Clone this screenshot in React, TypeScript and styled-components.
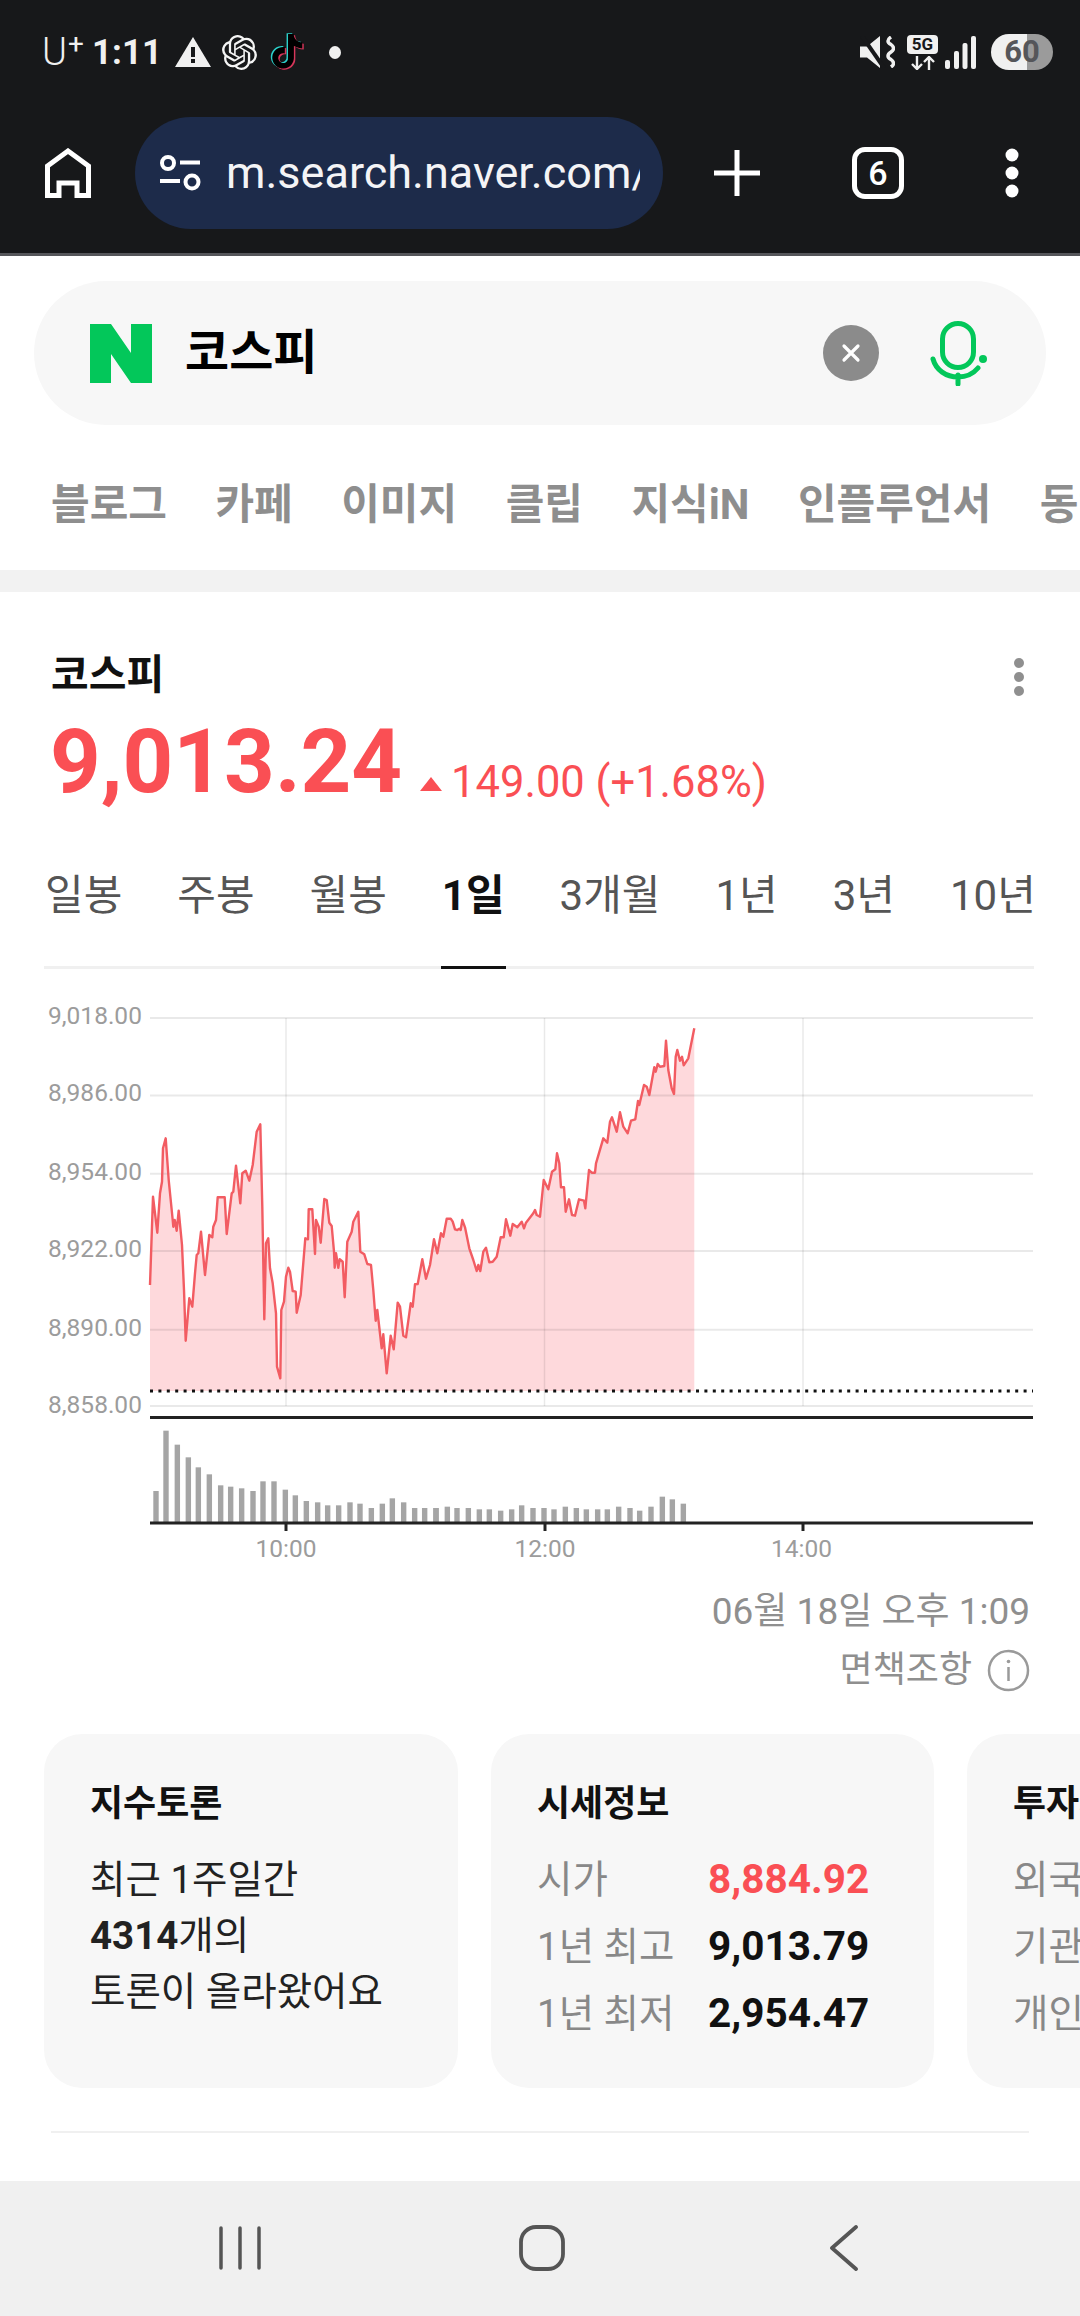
import React from "react";
import styled, { createGlobalStyle } from "styled-components";

const Global = createGlobalStyle`
  html, body { margin: 0; padding: 0; background: #fff; }
  * { box-sizing: border-box; }
`;

const FONT = `Roboto, "Noto Sans CJK KR", sans-serif`;
const RED = "#fa4f54";

const Page = styled.div`
  width: 1080px; height: 2316px; overflow: hidden; display: flex; flex-direction: column;
  font-family: ${FONT}; background: #fff;
`;
const TopBar = styled.header`
  background: #17181a; height: 256px; border-bottom: 3px solid #55565a; display: flex; flex-direction: column;
`;
const StatusRow = styled.div`
  height: 104px; padding: 0 27px 0 42px; display: flex; align-items: center; color: #f0f0f0;
`;
const Carrier = styled.span`
  font-size: 38px; font-weight: 300; width: 21px; display: flex; line-height: 38px; letter-spacing: 0;
`;
const Plus = styled.span`
  font-size: 28px; font-weight: 400; line-height: 24px; margin-left: 1px; margin-top: -1px;
`;
const Clock = styled.span`
  font-size: 35px; font-weight: 700; margin-left: 29px; width: 63px; letter-spacing: 0;
`;
const Glyph = styled.svg<{ $ml: number }>`
  display: block; flex: none; margin-left: ${(p) => p.$ml}px;
`;
const MoreIcon = styled.svg`
  display: block; flex: none; margin-top: 4px;
`;
const StatusDot = styled.span`
  width: 12px; height: 13px; border-radius: 50%; background: #f0f0f0; margin-left: 23px;
`;
const Spacer = styled.div`flex: 1;`;
const NetStack = styled.div`
  margin-left: 12px; display: flex; flex-direction: column; align-items: center; gap: 2px; width: 31px;
`;
const FiveG = styled.span`
  width: 31px; height: 19px; background: #f0f0f0; color: #17181a; border-radius: 4px;
  font-size: 17px; font-weight: 700; line-height: 19px; text-align: center;
`;
const Battery = styled.span`
  width: 62px; height: 36px; margin-left: 15px; border-radius: 18px;
  background: linear-gradient(90deg, #f0f0f0 58%, #9b9b9b 58%); color: #55565a;
  font-size: 31px; font-weight: 700; line-height: 36px; text-align: center;
`;
const BrowserRow = styled.div`
  display: flex; align-items: center; height: 112px; margin-top: 13px; padding-left: 45px;
`;
const UrlPill = styled.div`
  width: 528px; height: 112px; border-radius: 56px; background: #1d2b4a; margin-left: 44px; flex: none;
  display: flex; align-items: center; padding-left: 24px;
`;
const UrlText = styled.div`
  width: 414px; margin-left: 24px; overflow: hidden; white-space: nowrap; color: #f4f4f6;
  font-size: 45px; line-height: 56px;
`;
const TabCount = styled.div`
  width: 52px; height: 52px; margin-left: 92px; border: 5px solid #fff; border-radius: 13px; color: #fff;
  font-size: 34px; font-weight: 500; line-height: 42px; text-align: center; flex: none;
`;
const SearchWrap = styled.section`padding: 25px 34px 0;`;
const SearchPill = styled.div`
  height: 144px; border-radius: 72px; background: #f7f7f7; display: flex; align-items: center; padding: 0 58px 0 56px;
`;
const Query = styled.span`
  margin-left: 33px; font-size: 48px; font-weight: 700; color: #000; line-height: 60px;
`;
const ClearBtn = styled.span`
  margin-left: auto; width: 56px; height: 56px; border-radius: 50%; background: #8b8b8b;
  display: flex; align-items: center; justify-content: center;
`;
const Verticals = styled.nav`
  display: flex; gap: 48.5px; padding: 56px 0 41px 51px; overflow: hidden; white-space: nowrap;
`;
const Vertical = styled.span`
  font-size: 42px; font-weight: 700; line-height: 48px; color: #8e8e8e; flex: none;
`;
const Band = styled.div`height: 22px; background: #f2f2f2; flex: none;`;
const Main = styled.main`flex: 1; display: flex; flex-direction: column; min-height: 0;`;
const TitleRow = styled.div`
  padding: 61px 55px 0 51px; display: flex; justify-content: space-between; align-items: center;
`;
const Title = styled.h2`
  margin: 0; font-size: 41px; font-weight: 700; line-height: 44px; color: #111;
`;
const PriceRow = styled.div`
  margin-top: 15px; padding-left: 50px; display: flex; align-items: flex-end;
`;
const Price = styled.span`
  font-size: 88.5px; font-weight: 700; line-height: 100px; color: ${RED}; letter-spacing: 0;
`;
const UpMark = styled.span`
  width: 0; height: 0; border-left: 11px solid transparent; border-right: 11px solid transparent;
  border-bottom: 14px solid ${RED}; margin: 0 9px 21px 18px;
`;
const Change = styled.span`
  font-size: 43.5px; line-height: 50px; color: ${RED}; margin-bottom: 4px; font-weight: 400;
`;
const TabBar = styled.div`
  margin: 44px 46px 0 44px; height: 113px; display: flex; gap: 53px; border-bottom: 3px solid #f0f0f0; white-space: nowrap;
`;
const Tab = styled.span<{ $active?: boolean }>`
  flex: none; height: 113px; font-size: 42px; line-height: 80px; padding: 0 1px;
  color: ${(p) => (p.$active ? "#111" : "#555")}; font-weight: ${(p) => (p.$active ? 700 : 400)};
  border-bottom: 3px solid ${(p) => (p.$active ? "#111" : "transparent")};
`;
const ChartSvg = styled.svg`display: block; flex: none; margin-top: 5px;`;
const AxisText = styled.text`
  font-family: ${FONT}; font-size: 24.5px; fill: #9c9c9c;
`;
const DateRow = styled.div`
  padding-right: 50px; text-align: right; font-size: 37px; line-height: 50px; color: #8f8f8f;
`;
const NoticeRow = styled.div`
  margin-top: 10px; padding-right: 50px; display: flex; justify-content: flex-end; align-items: center; gap: 15px;
  font-size: 36px; line-height: 46px; color: #8f8f8f;
`;
const Cards = styled.div`
  margin-top: 41px; padding-left: 44px; display: flex; gap: 33px; overflow: hidden; flex: none;
`;
const Card = styled.article<{ $w: number }>`
  flex: none; width: ${(p) => p.$w}px; height: 354px; border-radius: 38px; background: #f7f7f7; padding: 46px 0 0 46px; overflow: hidden;
`;
const CardTitle = styled.h3`
  margin: 0; font-size: 36px; font-weight: 700; line-height: 48px; color: #111; white-space: nowrap;
`;
const CardBody = styled.div`margin-top: 24px; font-size: 38.5px; line-height: 56px; color: #222; white-space: nowrap;`;
const Strong = styled.b`font-weight: 700;`;
const QuoteGrid = styled.dl`
  margin: 18px 0 0; display: grid; grid-template-columns: 171px auto; justify-content: start; white-space: nowrap;
`;
const QuoteLabel = styled.dt`font-size: 38.5px; line-height: 67px; color: #888;`;
const QuoteValue = styled.dd<{ $red?: boolean }>`
  margin: 0; font-size: 40.5px; line-height: 67px; font-weight: 700; color: ${(p) => (p.$red ? RED : "#111")};
`;
const Divider = styled.hr`
  margin: 43px 51px 0; border: 0; border-top: 2px solid #f0f0f0; width: 978px;
`;
const NavBar = styled.footer`
  margin-top: auto; height: 135px; background: #f0f0f0; flex: none; display: flex; align-items: flex-start; padding: 44px 0 0 218px;
`;

const tiktok =
  "M12.525.02c1.31-.02 2.61-.01 3.91-.02.08 1.53.63 3.09 1.75 4.17 1.12 1.11 2.7 1.62 4.24 1.79v4.03c-1.44-.05-2.89-.35-4.2-.97-.57-.26-1.1-.59-1.62-.93-.01 2.92.01 5.84-.02 8.75-.08 1.4-.54 2.79-1.35 3.94-1.31 1.92-3.58 3.17-5.91 3.21-1.43.08-2.86-.31-4.08-1.03-2.02-1.19-3.44-3.37-3.65-5.71-.02-.5-.03-1-.01-1.49.18-1.9 1.12-3.72 2.58-4.96 1.66-1.44 3.98-2.13 6.15-1.72.02 1.48-.04 2.96-.04 4.44-.99-.32-2.15-.23-3.02.37-.63.41-1.11 1.04-1.36 1.75-.21.51-.15 1.07-.14 1.61.24 1.64 1.82 3.02 3.5 2.87 1.12-.01 2.19-.66 2.77-1.61.19-.33.4-.67.41-1.06.1-1.79.06-3.57.07-5.36.01-4.03-.01-8.05.02-12.07z";
const openai =
  "M22.282 9.821a5.985 5.985 0 0 0-.516-4.91 6.046 6.046 0 0 0-6.51-2.9A6.065 6.065 0 0 0 4.981 4.18a5.985 5.985 0 0 0-3.998 2.9 6.046 6.046 0 0 0 .743 7.097 5.98 5.98 0 0 0 .51 4.911 6.051 6.051 0 0 0 6.515 2.9A5.985 5.985 0 0 0 13.26 24a6.056 6.056 0 0 0 5.772-4.206 5.99 5.99 0 0 0 3.997-2.9 6.056 6.056 0 0 0-.747-7.073zM13.26 22.43a4.476 4.476 0 0 1-2.876-1.04l.141-.081 4.779-2.758a.795.795 0 0 0 .392-.681v-6.737l2.02 1.168a.071.071 0 0 1 .038.052v5.583a4.504 4.504 0 0 1-4.494 4.494zM3.6 18.304a4.47 4.47 0 0 1-.535-3.014l.142.085 4.783 2.759a.771.771 0 0 0 .78 0l5.843-3.369v2.332a.08.08 0 0 1-.033.062L9.74 19.95a4.5 4.5 0 0 1-6.14-1.646zM2.34 7.896a4.485 4.485 0 0 1 2.366-1.973V11.6a.766.766 0 0 0 .388.676l5.815 3.355-2.02 1.168a.076.076 0 0 1-.071 0l-4.83-2.786A4.504 4.504 0 0 1 2.34 7.872zm16.597 3.855l-5.833-3.387L15.119 7.2a.076.076 0 0 1 .071 0l4.83 2.791a4.494 4.494 0 0 1-.676 8.105v-5.678a.79.79 0 0 0-.407-.667zm2.01-3.023l-.141-.085-4.774-2.782a.776.776 0 0 0-.785 0L9.409 9.23V6.897a.066.066 0 0 1 .028-.061l4.83-2.787a4.5 4.5 0 0 1 6.68 4.66zm-12.64 4.135l-2.02-1.164a.08.08 0 0 1-.038-.057V6.075a4.5 4.5 0 0 1 7.375-3.453l-.142.08L8.704 5.46a.795.795 0 0 0-.393.681zm1.097-2.365l2.602-1.5 2.607 1.5v2.999l-2.597 1.5-2.607-1.5z";

const z4: number[][] = [[360,885],[369,620],[382,728],[390,610],[396,575],[399,475],[407,445],[416,570],[428,690],[430,710],[434,690],[440,722],[446,662],[456,765],[462,900],[467,1052],[478,925],[487,950],[495,850],[500,795],[505,790],[513,725],[525,855],[538,735],[547,742],[550,710],[558,690],[563,622],[584,622],[590,732],[605,610],[610,605],[618,527],[631,640],[637,550],[647,542],[658,572],[668,525],[680,425],[691,403],[697,650],[703,988],[708,760],[715,745],[720,835],[728,880],[738,970],[741,1130],[751,1165],[754,960],[762,935],[768,860],[775,833],[780,845],[788,903],[797,905],[800,968],[812,915],[826,745],[834,748],[836,658],[847,658],[855,792],[858,690],[866,710],[872,758],[883,627],[890,630],[898,698],[905,708],[912,785],[914,833],[918,790],[925,833],[929,808],[938,815],[944,922],[952,755],[965,725],[970,695],[985,665],[991,785],[1003,793],[1012,822],[1020,824]];
const z5: number[][] = [[33,825],[40,900],[47,992],[52,960],[65,1075],[70,1033],[80,1150],[92,1037],[101,1078],[113,938],[120,950],[130,1037],[138,1042],[152,940],[158,950],[165,883],[173,882],[187,808],[198,866],[210,825],[222,748],[232,790],[243,730],[250,740],[260,686],[272,686],[278,695],[285,718],[292,720],[298,716],[302,720],[307,690],[315,712],[328,775],[340,810],[350,843],[355,825],[361,843],[370,785],[378,773],[388,817],[398,815],[410,800],[422,742],[431,742],[438,688],[451,737],[458,702],[472,712],[485,695],[492,715],[498,698],[520,670],[525,660],[530,675],[540,680],[551,570],[565,598],[576,545],[586,538],[591,490],[598,520],[603,592],[612,592],[617,665],[627,628],[636,675],[645,677],[657,628],[672,632],[676,655],[687,540],[695,548],[705,548],[708,520],[730,445],[742,458],[750,395],[756,382],[770,425],[780,367],[790,410],[803,430],[813,392],[826,388],[834,333],[838,345],[852,285],[860,290],[868,315],[883,232],[887,245],[893,222],[900,230],[913,228],[918,152],[925,240],[935,295],[942,312],[947,200],[952,180],[960,212],[966,200],[971,226],[985,205],[1003,115]];
const trace = [
  ...z4.map(([x, y]) => [x / 3 + 30, y / 3 + 990]),
  ...z5.map(([x, y]) => [x / 3 + 360, y / 3 + 990]),
].map(([x, y]) => `${x.toFixed(1)},${y.toFixed(1)}`);
const line = trace.join(" ");
const area = `150,1391 ${line} 694.3,1391`;

const b8: number[][] = [[48,273],[78,92],[112,134],[145,172],[175,202],[208,223],[242,256],[272,260],[305,265],[339,273],[369,244],[402,244],[436,269],[466,286],[499,303],[533,307],[563,316],[596,316],[630,307],[660,311],[694,324],[727,311],[757,295],[791,307],[824,324],[854,324],[888,324]];
const b9: number[][] = [[18,324],[52,320],[81,324],[115,324],[148,328],[178,328],[212,332],[245,328],[275,316],[309,324],[342,324],[372,328],[406,320],[439,324],[469,328],[503,328],[532,328],[566,320],[600,324],[629,332],[663,320],[697,290],[727,298],[760,311]];
const bars = [
  ...b8.map(([x, y]) => [x / 3 + 140, y / 3 + 1400]),
  ...b9.map(([x, y]) => [x / 3 + 430, y / 3 + 1400]),
];

const yLabels: [string, number][] = [["9,018.00", 1024], ["8,986.00", 1101], ["8,954.00", 1180], ["8,922.00", 1257], ["8,890.00", 1336], ["8,858.00", 1413]];
const gridY = [1018, 1095.5, 1173.7, 1251, 1329.7, 1406];
const gridX = [286, 544.5, 803];
const timeLabels: [string, number, number][] = [["10:00", 286, 286], ["12:00", 545, 545], ["14:00", 803, 801.5]];

const Chart = () => (
  <ChartSvg width={1080} height={613} viewBox="0 974 1080 613">
    <polygon points={area} fill="#fed9dc" />
    {gridY.map((y) => (
      <line key={y} x1={150} x2={1033} y1={y} y2={y} stroke="rgba(0,0,0,0.085)" strokeWidth={2} />
    ))}
    {gridX.map((x) => (
      <line key={x} x1={x} x2={x} y1={1018} y2={1406} stroke="rgba(0,0,0,0.085)" strokeWidth={1.5} />
    ))}
    <polyline points={line} fill="none" stroke="#f25c62" strokeWidth={2.4} strokeLinejoin="round" />
    <line x1={150} x2={1033} y1={1391} y2={1391} stroke="#111" strokeWidth={3} strokeDasharray="3 5.4" />
    <line x1={150} x2={1033} y1={1417.5} y2={1417.5} stroke="#222" strokeWidth={3} />
    {bars.map(([x, y]) => (
      <rect key={x} x={x - 2.7} y={y} width={5.4} height={1523 - y} fill="#a5a5a5" />
    ))}
    <line x1={150} x2={1033} y1={1523} y2={1523} stroke="#222" strokeWidth={3} />
    {timeLabels.map(([t, x, lx]) => (
      <g key={t}>
        <line x1={x} x2={x} y1={1523} y2={1531} stroke="#222" strokeWidth={3} />
        <AxisText x={lx} y={1557} textAnchor="middle">{t}</AxisText>
      </g>
    ))}
    {yLabels.map(([t, y]) => (
      <AxisText key={t} x={48} y={y}>{t}</AxisText>
    ))}
  </ChartSvg>
);

export default function App() {
  return (
    <Page>
      <Global />
      <TopBar>
        <StatusRow>
          <Carrier>U<Plus>+</Plus></Carrier>
          <Clock>1:11</Clock>
          <Glyph $ml={20} width={36} height={30} viewBox="0 0 36 30">
            <path d="M18 0 36 30H0z" fill="#f0f0f0" />
            <rect x={16} y={10} width={4} height={10} fill="#17181a" />
            <rect x={16} y={22} width={4} height={4} fill="#17181a" />
          </Glyph>
          <Glyph $ml={11} width={35} height={35} viewBox="0 0 24 24">
            <path d={openai} fill="#f4f4f4" />
          </Glyph>
          <Glyph $ml={13} width={36} height={38} viewBox="0 0 25 25">
            <path d={tiktok} fill="#2ccfc9" transform="translate(-1 -.6)" />
            <path d={tiktok} fill="#d6365a" transform="translate(1 .8)" />
            <path d={tiktok} fill="#000" />
          </Glyph>
          <StatusDot />
          <Spacer />
          <Glyph $ml={0} width={35} height={32} viewBox="0 0 35 32">
            <path d="M0 10.500h7L20 0v32L7 21.500H0z" fill="#f0f0f0" />
            <path d="M2 0l22 32" stroke="#17181a" strokeWidth={4} />
            <path d="M31 1q-6 4 0 7.500q5 4 0 7.500q-6 4 0 7.500q5 4 0 7.500" fill="none" stroke="#f0f0f0" strokeWidth={3.500} />
          </Glyph>
          <NetStack>
            <FiveG>5G</FiveG>
            <Glyph $ml={0} width={24} height={14} viewBox="0 0 24 14">
              <path d="M6 0v13M1 8l5 5 5-5M18 14V1M13 6l5-5 5 5" fill="none" stroke="#f0f0f0" strokeWidth={2.400} />
            </Glyph>
          </NetStack>
          <Glyph $ml={7} width={31} height={33} viewBox="0 0 31 33">
            <rect x={0} y={24} width={5} height={9} rx={2} fill="#f0f0f0" />
            <rect x={9} y={15} width={5} height={18} rx={2} fill="#f0f0f0" />
            <rect x={17.500} y={7} width={5} height={26} rx={2} fill="#f0f0f0" />
            <rect x={26} y={0} width={5} height={33} rx={2} fill="#f0f0f0" />
          </Glyph>
          <Battery>60</Battery>
        </StatusRow>
        <BrowserRow>
          <Glyph $ml={0} width={46} height={50} viewBox="0 0 46 50">
            <path d="M2.500 47.500V18L23 3l20.500 15v29.500H32V35H14v12.500z" fill="none" stroke="#fff" strokeWidth={5} />
          </Glyph>
          <UrlPill>
            <Glyph $ml={0} width={43} height={36} viewBox="0 0 43 36">
              <circle cx={9} cy={8} r={6} fill="none" stroke="#fff" strokeWidth={4} />
              <path d="M21 7.500h20M1 26h20" stroke="#fff" strokeWidth={4} />
              <circle cx={33} cy={27} r={6.500} fill="none" stroke="#fff" strokeWidth={4} />
            </Glyph>
            <UrlText>m.search.naver.com/search</UrlText>
          </UrlPill>
          <Glyph $ml={51} width={46} height={46} viewBox="0 0 46 46">
            <path d="M0 23h46M23 0v46" stroke="#fff" strokeWidth={5} strokeLinecap="round" />
          </Glyph>
          <TabCount>6</TabCount>
          <Glyph $ml={101} width={14} height={50} viewBox="0 0 14 50">
            <circle cx={7} cy={7} r={6.500} fill="#fff" />
            <circle cx={7} cy={25} r={6.500} fill="#fff" />
            <circle cx={7} cy={43} r={6.500} fill="#fff" />
          </Glyph>
        </BrowserRow>
      </TopBar>
      <SearchWrap>
        <SearchPill>
          <Glyph $ml={0} width={62} height={59} viewBox="0 0 62 59">
            <path d="M0 0h21l20 29V0h21v59H41L21 30v29H0z" fill="#03c75a" />
          </Glyph>
          <Query>코스피</Query>
          <ClearBtn>
            <svg width={20} height={20} viewBox="0 0 20 20">
              <path d="M3 3l14 14M17 3L3 17" stroke="#fff" strokeWidth={3.200} strokeLinecap="round" />
            </svg>
          </ClearBtn>
          <Glyph $ml={51} width={58} height={65} viewBox="0 0 58 65">
            <rect x={12.500} y={2.500} width={31} height={44} rx={15.500} fill="none" stroke="#03c75a" strokeWidth={5} />
            <path d="M3 38c3 11 13 18 25 18 9 0 15-3 20-9M28 54v9" fill="none" stroke="#03c75a" strokeWidth={5} strokeLinecap="round" />
            <circle cx={53} cy={38} r={4} fill="#03c75a" />
          </Glyph>
        </SearchPill>
      </SearchWrap>
      <Verticals>
        {["블로그", "카페", "이미지", "클립", "지식iN", "인플루언서", "동영상"].map((v) => (
          <Vertical key={v}>{v}</Vertical>
        ))}
      </Verticals>
      <Band />
      <Main>
        <TitleRow>
          <Title>코스피</Title>
          <MoreIcon width={12} height={40} viewBox="0 0 12 40">
            <circle cx={6} cy={6} r={5} fill="#8f8f8f" />
            <circle cx={6} cy={20} r={5} fill="#8f8f8f" />
            <circle cx={6} cy={34} r={5} fill="#8f8f8f" />
          </MoreIcon>
        </TitleRow>
        <PriceRow>
          <Price>9,013.24</Price>
          <UpMark />
          <Change>149.00 (+1.68%)</Change>
        </PriceRow>
        <TabBar>
          {["일봉", "주봉", "월봉"].map((t) => <Tab key={t}>{t}</Tab>)}
          <Tab $active>1일</Tab>
          {["3개월", "1년", "3년", "10년"].map((t) => <Tab key={t}>{t}</Tab>)}
        </TabBar>
        <Chart />
        <DateRow>06월 18일 오후 1:09</DateRow>
        <NoticeRow>
          면책조항
          <svg width={43} height={43} viewBox="0 0 43 43">
            <circle cx={21.500} cy={21.500} r={19.500} fill="none" stroke="#9a9a9a" strokeWidth={2.500} />
            <path d="M21.500 18v14" stroke="#9a9a9a" strokeWidth={2.500} />
            <circle cx={21.500} cy={12.500} r={1.800} fill="#9a9a9a" />
          </svg>
        </NoticeRow>
        <Cards>
          <Card $w={414}>
            <CardTitle>지수토론</CardTitle>
            <CardBody>
              최근 1주일간<br />
              <Strong>4314</Strong>개의<br />
              토론이 올라왔어요
            </CardBody>
          </Card>
          <Card $w={443}>
            <CardTitle>시세정보</CardTitle>
            <QuoteGrid>
              <QuoteLabel>시가</QuoteLabel><QuoteValue $red>8,884.92</QuoteValue>
              <QuoteLabel>1년 최고</QuoteLabel><QuoteValue>9,013.79</QuoteValue>
              <QuoteLabel>1년 최저</QuoteLabel><QuoteValue>2,954.47</QuoteValue>
            </QuoteGrid>
          </Card>
          <Card $w={443}>
            <CardTitle>투자자별</CardTitle>
            <QuoteGrid>
              <QuoteLabel>외국인</QuoteLabel><QuoteValue>-</QuoteValue>
              <QuoteLabel>기관</QuoteLabel><QuoteValue>-</QuoteValue>
              <QuoteLabel>개인</QuoteLabel><QuoteValue>-</QuoteValue>
            </QuoteGrid>
          </Card>
        </Cards>
        <Divider />
        <NavBar>
          <Glyph $ml={0} width={44} height={46} viewBox="0 0 44 46">
            <path d="M3 3v40M22 3v40M41 3v40" stroke="#555" strokeWidth={3.500} strokeLinecap="round" />
          </Glyph>
          <Glyph $ml={257} width={46} height={46} viewBox="0 0 46 46">
            <rect x={2} y={2} width={42} height={42} rx={15} fill="none" stroke="#555" strokeWidth={3.800} />
          </Glyph>
          <Glyph $ml={264} width={30} height={46} viewBox="0 0 30 46">
            <path d="M27 2 3 23l24 21" fill="none" stroke="#555" strokeWidth={3.800} strokeLinecap="round" strokeLinejoin="round" />
          </Glyph>
        </NavBar>
      </Main>
    </Page>
  );
}
